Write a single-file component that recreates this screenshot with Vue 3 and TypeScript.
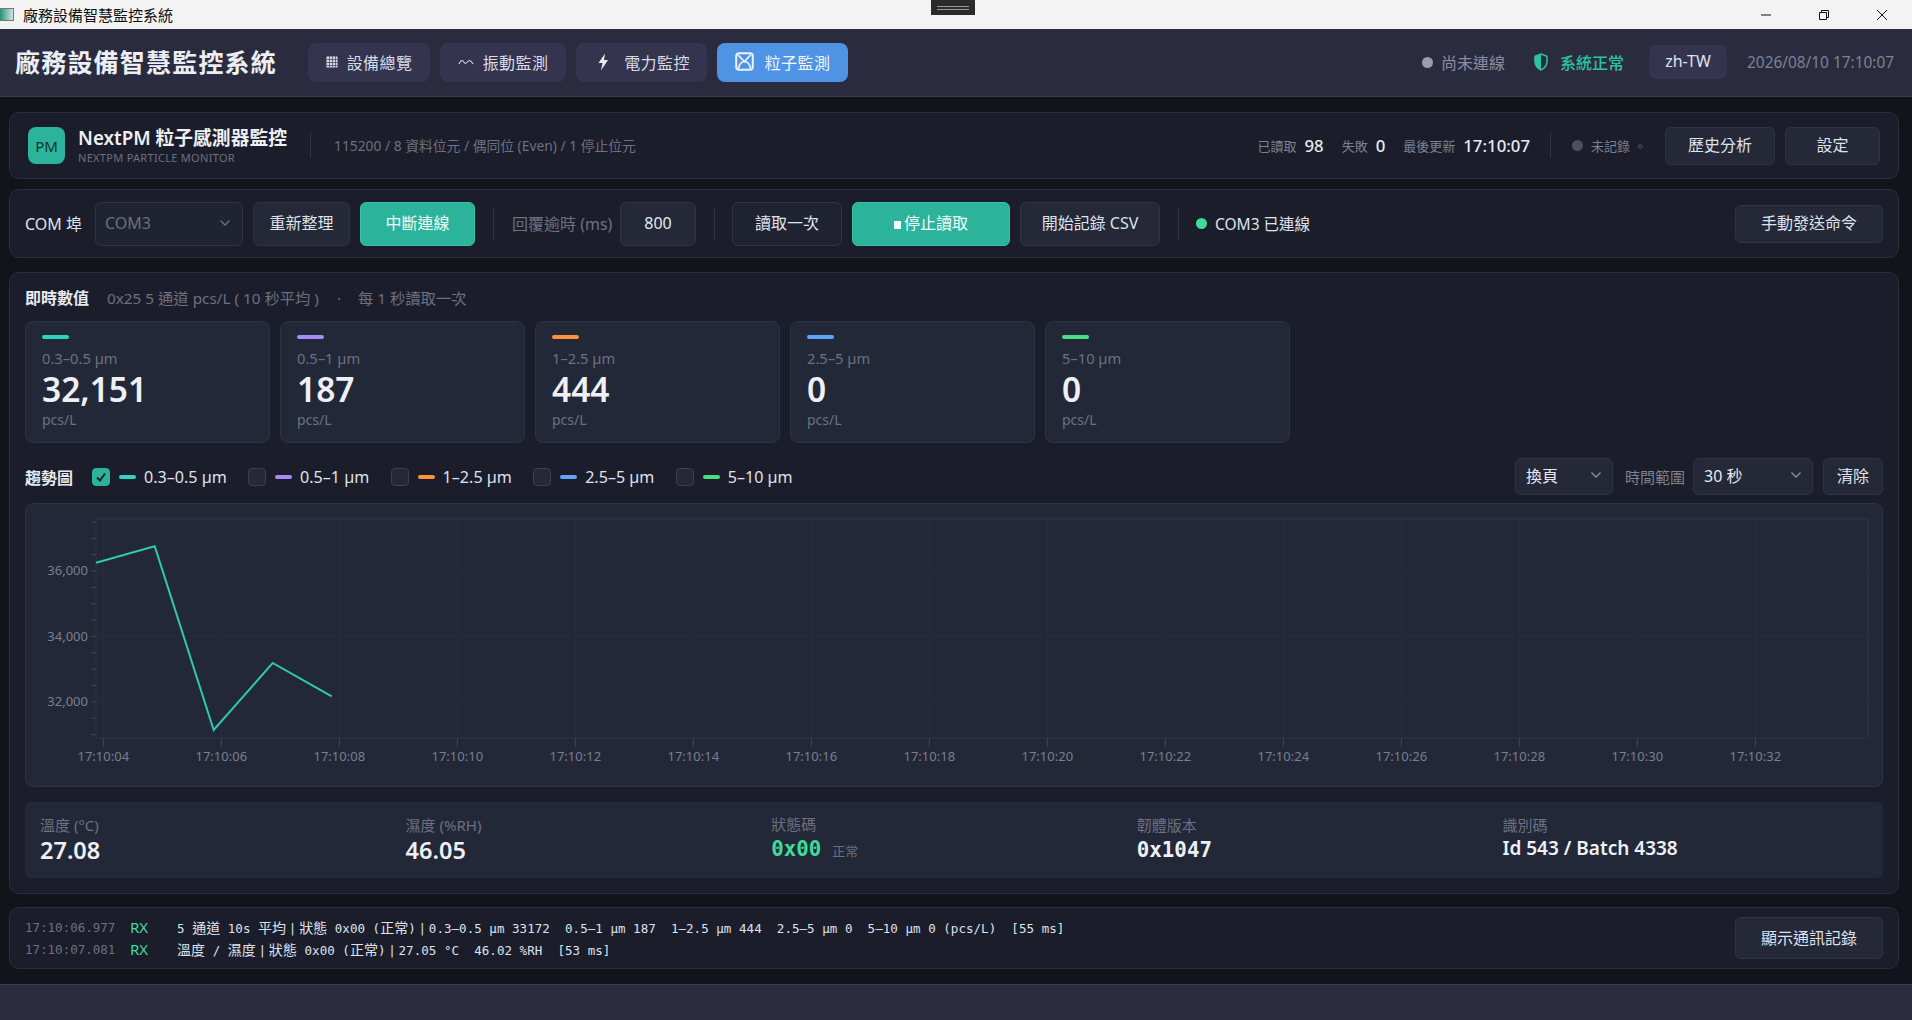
<script setup lang="ts">
import { computed } from 'vue'

const channels = [
  { label: '0.3–0.5 µm', value: '32,151', color: '#2dd4bf', on: true },
  { label: '0.5–1 µm', value: '187', color: '#a78bfa', on: false },
  { label: '1–2.5 µm', value: '444', color: '#fb923c', on: false },
  { label: '2.5–5 µm', value: '0', color: '#60a5fa', on: false },
  { label: '5–10 µm', value: '0', color: '#4ade80', on: false }
]

// chart geometry, in px of the chart box
const plot = { left: 70, top: 15, right: 1842, bottom: 234 }
const xTicks = Array.from({ length: 15 }, (_, i) => ({
  x: 77.3 + i * 118,
  label: '17:10:' + String(4 + i * 2).padStart(2, '0')
}))
const yMajor = [
  { y: 67, label: '36,000' },
  { y: 132.5, label: '34,000' },
  { y: 198, label: '32,000' }
]
const yMinor = Array.from({ length: 14 }, (_, i) => 18 + i * 16.35)
const points = [
  [70, 58.7], [128.7, 42.3], [187.7, 226], [246.7, 159], [305.7, 192.3]
]
const linePoints = computed(() => points.map(p => p.join(',')).join(' '))

// CJK runs and the | separators of a log line get their own styling
function splitRuns(msg: string) {
  return msg.split(/([\u4e00-\u9fff]+|\|)/).filter(Boolean).map(text => ({
    text,
    kind: text === '|' ? 'bar' : /[\u4e00-\u9fff]/.test(text) ? 'cjk' : ''
  }))
}

const logs = [
  { time: '17:10:06.977', msg: '5 通道 10s 平均|狀態 0x00 (正常)|0.3–0.5 µm 33172  0.5–1 µm 187  1–2.5 µm 444  2.5–5 µm 0  5–10 µm 0 (pcs/L)  [55 ms]' },
  { time: '17:10:07.081', msg: '溫度 / 濕度|狀態 0x00 (正常)|27.05 °C  46.02 %RH  [53 ms]' }
].map(l => ({ ...l, runs: splitRuns(l.msg) }))
</script>

<template>
  <div class="app">
    <div class="titlebar">
      <div class="tb-icon"></div>
      <span class="tb-text">廠務設備智慧監控系統</span>
      <div class="tb-grab"><i></i><i></i></div>
      <div class="tb-controls">
        <svg width="12" height="12" viewBox="0 0 12 12"><path d="M1 6h10" stroke="#111" fill="none"/></svg>
        <svg width="12" height="12" viewBox="0 0 12 12"><path d="M1.500 3.500h7v7h-7zM3.500 3.500v-2h7v7h-2" stroke="#111" fill="none"/></svg>
        <svg width="12" height="12" viewBox="0 0 12 12"><path d="M1 1l10 10M11 1L1 11" stroke="#111" fill="none"/></svg>
      </div>
    </div>

    <header class="topbar">
      <h1 class="brand">廠務設備智慧監控系統</h1>
      <nav class="nav">
        <button class="nav-btn w122">
          <svg width="12" height="12" viewBox="0 0 12 12"><path d="M.5.5h11v11H.5z" fill="#d8dbe6"/><path d="M3.500.5v11M6.500.5v11M9.500.5v11M.5 3.500h11M.5 6.500h11M.5 9.500h11" stroke="#4a4c64" stroke-width=".8"/></svg>
          設備總覽
        </button>
        <button class="nav-btn w126">
          <svg width="16" height="8" viewBox="0 0 16 8"><path d="M1 6C2 3.500 3 2.500 4 2.500S6 5 7.500 5.500C9 5 10 2.500 11.500 2.500S14 4.500 15 6" stroke="#d8dbe6" stroke-width="1.100" fill="none"/></svg>
          振動監測
        </button>
        <button class="nav-btn w131">
          <svg class="power" width="12" height="18" viewBox="0 0 12 18"><path d="M8 .5L1.500 10h4L4 17.500l7-10.500H7z" fill="#e8eaf2"/></svg>
          電力監控
        </button>
        <button class="nav-btn active w131">
          <svg class="particle" width="19" height="19" viewBox="0 0 19 19"><rect x="1.200" y="1.200" width="16.600" height="16.600" rx="3" fill="none" stroke="#eef3fb" stroke-width="2"/><path d="M3 3l6.500 6.500L15.500 3M3.500 16.500c.8-4.500 3-7 6-7s5.200 2.500 6 7" stroke="#eef3fb" stroke-width="1.700" fill="none"/></svg>
          粒子監測
        </button>
      </nav>
      <div class="top-right">
        <span class="dot grey"></span>
        <span class="conn">尚未連線</span>
        <svg class="shield" width="14" height="18" viewBox="0 0 14 18"><path d="M7 1l6 2.200v5c0 4-2.500 7-6 8.800-3.500-1.800-6-4.800-6-8.800v-5z" fill="none" stroke="#2bc4a0" stroke-width="1.500"/><path d="M7 1L1 3.200v5c0 4 2.500 7 6 8.800z" fill="#2bc4a0"/></svg>
        <span class="sys-ok">系統正常</span>
        <button class="lang">zh-TW</button>
        <span class="clock">2026/08/10 17:10:07</span>
      </div>
    </header>

    <main class="main">
      <section class="panel head-panel">
        <div class="logo">PM</div>
        <div class="head-title">
          <div class="ht-main">NextPM 粒子感測器監控</div>
          <div class="ht-sub">NEXTPM PARTICLE MONITOR</div>
        </div>
        <span class="vline tall"></span>
        <span class="serial">115200 / 8 資料位元 / 偶同位 (Even) / 1 停止位元</span>
        <div class="head-stats">
          <span class="st-label">已讀取</span><b class="st-val">98</b>
          <span class="st-label ml">失敗</span><b class="st-val">0</b>
          <span class="st-label ml">最後更新</span><b class="st-val">17:10:07</b>
        </div>
        <span class="vline tall v2"></span>
        <span class="rec-dot"></span>
        <span class="rec-text">未記錄 ◦</span>
        <button class="btn b110">歷史分析</button>
        <button class="btn b95">設定</button>
      </section>

      <section class="panel ctrl-panel">
        <span class="ctl-label">COM 埠</span>
        <div class="select com">COM3
          <svg width="12" height="8" viewBox="0 0 12 8"><path d="M1.500 1.500L6 6l4.500-4.500" stroke="#6b7080" stroke-width="1.300" fill="none"/></svg>
        </div>
        <button class="btn tall-btn w97">重新整理</button>
        <button class="btn tall-btn primary w115">中斷連線</button>
        <span class="vline ctl-div"></span>
        <span class="ctl-muted">回覆逾時 (ms)</span>
        <div class="num-input">800</div>
        <span class="vline ctl-div"></span>
        <button class="btn tall-btn dark w110">讀取一次</button>
        <button class="btn tall-btn primary w158"><span class="stop-sq"></span>停止讀取</button>
        <button class="btn tall-btn w140">開始記錄 CSV</button>
        <span class="vline ctl-div"></span>
        <span class="dot green"></span>
        <span class="com-ok">COM3 已連線</span>
        <button class="btn send">手動發送命令</button>
      </section>

      <section class="panel data-panel">
        <div class="sec-head">
          <b>即時數值</b>
          <span>0x25 5 通道 pcs/L ( 10 秒平均 )<i class="sep">·</i>每 1 秒讀取一次</span>
        </div>
        <div class="cards">
          <div v-for="c in channels" :key="c.label" class="card">
            <i class="accent" :style="{ background: c.color }"></i>
            <div class="c-label">{{ c.label }}</div>
            <div class="c-value">{{ c.value }}</div>
            <div class="c-unit">pcs/L</div>
          </div>
        </div>

        <div class="trend-bar">
          <b class="trend-title">趨勢圖</b>
          <div v-for="c in channels" :key="c.label" class="legend">
            <span class="check" :class="{ on: c.on }">
              <svg v-if="c.on" width="12" height="12" viewBox="0 0 12 12"><path d="M2 6.500l3 3 5-7" stroke="#0f2226" stroke-width="2" fill="none"/></svg>
            </span>
            <i class="dash" :style="{ background: c.color }"></i>
            <span class="lg-text">{{ c.label }}</span>
          </div>
          <div class="trend-right">
            <div class="select mode">換頁
              <svg width="12" height="8" viewBox="0 0 12 8"><path d="M1.500 1.500L6 6l4.500-4.500" stroke="#8b90a0" stroke-width="1.300" fill="none"/></svg>
            </div>
            <span class="range-label">時間範圍</span>
            <div class="select range">30 秒
              <svg width="12" height="8" viewBox="0 0 12 8"><path d="M1.500 1.500L6 6l4.500-4.500" stroke="#8b90a0" stroke-width="1.300" fill="none"/></svg>
            </div>
            <button class="btn clear">清除</button>
          </div>
        </div>

        <div class="chart">
          <svg width="1856" height="282" viewBox="0 0 1856 282">
            <rect :x="plot.left" :y="plot.top" :width="plot.right - plot.left" :height="plot.bottom - plot.top" fill="none" stroke="#2f3546" />
            <line v-for="t in xTicks" :key="t.label" :x1="t.x" :x2="t.x" :y1="plot.top" :y2="plot.bottom" stroke="#282d3d" />
            <line v-for="t in yMajor" :key="t.label" :x1="plot.left" :x2="plot.right" :y1="t.y" :y2="t.y" stroke="#282d3d" />
            <line v-for="t in xTicks" :key="'m' + t.label" :x1="t.x" :x2="t.x" :y1="plot.bottom" :y2="plot.bottom + 9" stroke="#3f4556" />
            <line v-for="y in yMinor" :key="y" :x1="plot.left - 5" :x2="plot.left" :y1="y" :y2="y" stroke="#3f4556" />
            <text v-for="t in xTicks" :key="'l' + t.label" :x="t.x" y="257" text-anchor="middle" class="axis">{{ t.label }}</text>
            <text v-for="t in yMajor" :key="'y' + t.label" :x="plot.left - 8" :y="t.y + 4" text-anchor="end" class="axis">{{ t.label }}</text>
            <polyline :points="linePoints" fill="none" stroke="#2dc9b4" stroke-width="2" />
          </svg>
        </div>

        <div class="info-bar">
          <div class="info">
            <div class="i-label">溫度 (°C)</div>
            <div class="i-value">27.08</div>
          </div>
          <div class="info">
            <div class="i-label">濕度 (%RH)</div>
            <div class="i-value">46.05</div>
          </div>
          <div class="info">
            <div class="i-label">狀態碼</div>
            <div class="i-value mono green-text">0x00<small>正常</small></div>
          </div>
          <div class="info">
            <div class="i-label">韌體版本</div>
            <div class="i-value mono">0x1047</div>
          </div>
          <div class="info">
            <div class="i-label">識別碼</div>
            <div class="i-value id">Id 543 / Batch 4338</div>
          </div>
        </div>
      </section>

      <section class="panel log-panel">
        <div class="log-lines">
          <div v-for="l in logs" :key="l.time" class="log-line">
            <span class="l-time">{{ l.time }}</span>
            <span class="l-rx">RX</span>
            <span class="l-msg"><span v-for="(r, i) in l.runs" :key="i" :class="r.kind">{{ r.text }}</span></span>
          </div>
        </div>
        <button class="btn log-btn">顯示通訊記錄</button>
      </section>
    </main>

    <footer class="footer"></footer>
  </div>
</template>

<style>
html, body {
  margin: 0;
  background: #12141c;
  overflow: hidden;
}
</style>

<style scoped>
.app {
  width: 1912px;
  height: 1020px;
  display: flex;
  flex-direction: column;
  font-family: "Noto Sans", "Noto Sans CJK TC", sans-serif;
  color: #e6e9f2;
  background: #12141c;
}

button {
  font-family: inherit;
  cursor: pointer;
  padding: 0;
}

/* window title bar */
.titlebar {
  height: 29px;
  background: #f3f3f3;
  display: flex;
  align-items: center;
  position: relative;
  flex: none;
}
.tb-icon {
  width: 14px;
  height: 13px;
  border: 1px solid #777;
  border-left: none;
  box-sizing: border-box;
  background: linear-gradient(90deg, #2a8f78, #cfe6e0);
}
.tb-text {
  margin-left: 9px;
  font-size: 15px;
  color: #111;
}
.tb-grab {
  position: absolute;
  left: 931px;
  top: 0;
  width: 44px;
  height: 15px;
  background: #2b2b2b;
  display: flex;
  flex-direction: column;
  align-items: center;
  justify-content: center;
  gap: 2px;
}
.tb-grab i {
  display: block;
  width: 32px;
  height: 1px;
  background: #999;
}
.tb-controls {
  margin-left: auto;
  padding-right: 24px;
  display: flex;
  gap: 46px;
}

/* app header */
.topbar {
  height: 67px;
  background: #2a2b3e;
  border-bottom: 1px solid #3a3c50;
  display: flex;
  align-items: center;
  padding: 0 18px 0 15px;
  flex: none;
}
.brand {
  margin: 0;
  padding-bottom: 3px;
  font-size: 25px;
  font-weight: 700;
  letter-spacing: 1.2px;
  width: 293px;
  color: #eceef5;
  white-space: nowrap;
}
.nav {
  display: flex;
  gap: 10px;
}
.nav-btn {
  height: 39px;
  background: #34344e;
  border: none;
  border-radius: 8px;
  color: #d8dbe6;
  font-size: 16px;
  letter-spacing: .4px;
  display: flex;
  align-items: center;
  justify-content: center;
  gap: 9px;
  box-sizing: border-box;
  padding-bottom: 2px;
}
.nav-btn .power { margin: 0 6px 0 4px; }
.nav-btn .particle { margin-right: 2px; }
.nav-btn.active {
  background: #4f94e4;
  color: #f2f6fc;
}
.w122 { width: 122px; }
.w126 { width: 126px; }
.w131 { width: 131px; }
.top-right {
  margin-left: auto;
  display: flex;
  align-items: center;
  padding-bottom: 1px;
}
.dot {
  width: 11px;
  height: 11px;
  border-radius: 50%;
  flex: none;
}
.dot.grey { background: #9a9cb0; }
.dot.green { background: #3ddc97; margin-left: -1px; }
.conn {
  margin-left: 8px;
  font-size: 16px;
  color: #8a8ca0;
}
.shield { margin-left: 29px; }
.sys-ok {
  margin-left: 12px;
  font-size: 16px;
  font-weight: 500;
  color: #2bc4a0;
}
.lang {
  margin-left: 25px;
  width: 78px;
  height: 34px;
  border: none;
  border-radius: 6px;
  background: #34344e;
  color: #e0e3ee;
  font-size: 16px;
  padding-bottom: 2px;
}
.clock {
  margin-left: 20px;
  font-size: 15.4px;
  color: #7f8194;
  white-space: nowrap;
}

/* page body */
.main {
  flex: none;
  padding: 15px 13px 0 9px;
  display: flex;
  flex-direction: column;
}
.panel {
  background: #1b1e2a;
  border: 1px solid #2a2e3d;
  border-radius: 10px;
  box-sizing: border-box;
  flex: none;
}
.vline {
  width: 1px;
  background: #2f3342;
  flex: none;
}
.btn {
  background: #242837;
  border: 1px solid #2f3445;
  border-radius: 6px;
  color: #dfe2ec;
  font-size: 16px;
  box-sizing: border-box;
  flex: none;
  padding-bottom: 3px;
}

.head-panel {
  height: 67px;
  display: flex;
  align-items: center;
  padding-left: 18px;
  padding-right: 18px;
}
.logo {
  width: 37px;
  height: 37px;
  border-radius: 8px;
  background: #2bb39b;
  color: #12332e;
  font-size: 15px;
  display: flex;
  align-items: center;
  justify-content: center;
}
.head-title { margin-left: 13px; width: 232px; }
.ht-main { font-size: 18.8px; font-weight: 600; line-height: 24px; color: #eef0f6; white-space: nowrap; }
.ht-sub { font-size: 11px; line-height: 15px; color: #6c7080; letter-spacing: .3px; white-space: nowrap; }
.vline.tall { height: 25px; }
.serial {
  margin-left: 23px;
  padding-bottom: 1px;
  font-size: 13.8px;
  color: #6c7080;
  white-space: nowrap;
}
.head-stats {
  margin-left: auto;
  display: flex;
  align-items: center;
  padding-bottom: 1px;
}
.st-label { font-size: 13px; color: #7d8190; }
.st-label.ml { margin-left: 18px; }
.st-val { margin-left: 8px; font-size: 16.8px; font-weight: 500; color: #e6e9f2; }
.v2 { margin-left: 20px; }
.rec-dot {
  margin-left: 21px;
  width: 11px;
  height: 11px;
  border-radius: 50%;
  background: #4b5160;
}
.rec-text {
  margin-left: 8px;
  width: 74px;
  font-size: 13px;
  color: #7d8190;
  white-space: nowrap;
}
.b110 { width: 110px; height: 38px; }
.b95 { width: 95px; height: 38px; margin-left: 10px; }

.ctrl-panel {
  margin-top: 10px;
  height: 69px;
  display: flex;
  align-items: center;
  padding-left: 15px;
  padding-right: 15px;
}
.ctl-label { font-size: 16px; width: 70px; color: #dfe2ec; white-space: nowrap; padding-bottom: 2px; }
.select {
  display: flex;
  align-items: center;
  justify-content: space-between;
  box-sizing: border-box;
  background: #242837;
  border: 1px solid #2f3445;
  border-radius: 6px;
  flex: none;
}
.select.com {
  width: 148px;
  height: 44px;
  padding: 0 11px 2px 9px;
  font-size: 16px;
  color: #6b7080;
  background: #202431;
}
.tall-btn { height: 44px; margin-left: 10px; }
.w97 { width: 97px; }
.w115 { width: 115px; }
.w110 { width: 110px; margin-left: -1px; }
.w158 { width: 158px; }
.w140 { width: 140px; }
.primary {
  background: #2bb39b;
  border-color: #33c4aa;
  color: #f2fbf9;
}
.dark { background: #1f2230; }
.stop-sq {
  display: inline-block;
  width: 7px;
  height: 8px;
  background: #f2fbf9;
  margin-right: 3px;
}
.ctl-div { height: 32px; margin: 0 18px; }
.ctl-muted { font-size: 16px; color: #6c7080; white-space: nowrap; width: 108px; padding-bottom: 1px; }
.num-input {
  width: 76px;
  height: 44px;
  box-sizing: border-box;
  background: #242837;
  border: 1px solid #2f3445;
  border-radius: 6px;
  display: flex;
  align-items: center;
  justify-content: center;
  font-size: 16px;
  padding-bottom: 2px;
}
.com-ok { margin-left: 8px; font-size: 15.5px; color: #dfe2ec; white-space: nowrap; padding-bottom: 1px; }
.send { margin-left: auto; width: 148px; height: 38px; }

.data-panel {
  margin-top: 14px;
  height: 622px;
  padding: 0 15px;
}
.sec-head {
  height: 48px;
  display: flex;
  align-items: center;
  gap: 18px;
}
.sec-head b { font-size: 16px; font-weight: 700; color: #e6e9f2; }
.sec-head span { font-size: 15.3px; color: #6c7080; white-space: nowrap; }
.sep { font-style: normal; margin: 0 17px 0 18px; }
.cards {
  display: flex;
  gap: 10px;
}
.card {
  width: 245px;
  height: 122px;
  box-sizing: border-box;
  background: #232838;
  border: 1px solid #2d3344;
  border-radius: 8px;
  padding: 13px 16px 0;
}
.accent {
  display: block;
  width: 27px;
  height: 4px;
  border-radius: 2px;
}
.c-label { margin-top: 10px; font-size: 14.7px; line-height: 18px; color: #6c7080; }
.c-value { margin-top: 2px; font-size: 33.5px; font-weight: 600; line-height: 40px; color: #eef0f6; }
.c-unit { margin-top: 1px; font-size: 14px; line-height: 20px; color: #6c7080; }

.trend-bar {
  margin-top: 15px;
  height: 37px;
  display: flex;
  align-items: center;
}
.trend-title { width: 67px; font-size: 16px; font-weight: 700; white-space: nowrap; }
.legend {
  display: flex;
  align-items: center;
  margin-right: 21.3px;
}
.check {
  width: 18px;
  height: 18px;
  box-sizing: border-box;
  border: 1px solid #3a4052;
  border-radius: 4px;
  background: #242837;
  display: flex;
  align-items: center;
  justify-content: center;
}
.check.on { background: #2bb39b; border-color: #2bb39b; }
.dash { width: 17px; height: 4px; border-radius: 2px; margin-left: 9px; }
.lg-text { margin-left: 8px; font-size: 16.1px; color: #dfe2ec; white-space: nowrap; }
.trend-right {
  margin-left: auto;
  display: flex;
  align-items: center;
}
.select.mode, .select.range {
  height: 37px;
  padding: 0 10px 3px;
  font-size: 16px;
  color: #e6e9f2;
}
.select.mode { width: 98px; }
.select.range { width: 120px; }
.range-label { margin: 0 8px 0 12px; font-size: 15px; color: #7d8190; white-space: nowrap; }
.clear { margin-left: 10px; width: 60px; height: 37px; }

.chart {
  margin-top: 8px;
  height: 284px;
  box-sizing: border-box;
  background: #232838;
  border: 1px solid #2d3344;
  border-radius: 8px;
}
.chart svg { display: block; }
.axis {
  font-size: 13px;
  fill: #7a7e90;
  font-family: "Noto Sans", sans-serif;
}

.info-bar {
  margin-top: 15px;
  height: 76px;
  background: #232838;
  border-radius: 6px;
  padding: 0 15px;
  display: grid;
  grid-template-columns: repeat(5, 1fr);
  align-items: center;
}
.i-label { font-size: 15px; line-height: 20px; color: #6c7080; }
.i-value {
  font-size: 23.5px;
  font-weight: 600;
  line-height: 30px;
  color: #eef0f6;
  white-space: nowrap;
}
.i-value.mono {
  font-family: "DejaVu Sans Mono", "Noto Sans CJK TC", monospace;
  font-size: 20.8px;
  font-weight: 700;
}
.i-value.id { font-size: 19px; line-height: 26px; margin-bottom: 4px; }
.green-text { color: #3ddc97; }
.i-value small {
  font-family: "Noto Sans", "Noto Sans CJK TC", sans-serif;
  font-size: 13px;
  font-weight: 400;
  color: #6c7080;
  margin-left: 11px;
}

.log-panel {
  margin-top: 13px;
  height: 62px;
  display: flex;
  align-items: center;
  padding: 0 15px;
}
.log-lines { flex: 1; }
.log-line {
  display: flex;
  height: 22px;
  align-items: center;
  font-family: "DejaVu Sans Mono", "Noto Sans CJK TC", monospace;
  font-size: 12.5px;
  white-space: pre;
}
.l-time { width: 105px; color: #6c7080; }
.l-rx { width: 47px; color: #3ddc97; font-family: "Noto Sans", sans-serif; font-size: 15px; }
.l-msg { color: #dfe2ec; letter-spacing: .04px; }
.cjk { font-size: 14px; }
.bar { margin: 0 2.700px; }
.log-btn { width: 148px; height: 42px; }

.footer {
  flex: 1;
  background: #2a2b3e;
  border-top: 1px solid #3a3c50;
  margin-top: 15px;
}
</style>
